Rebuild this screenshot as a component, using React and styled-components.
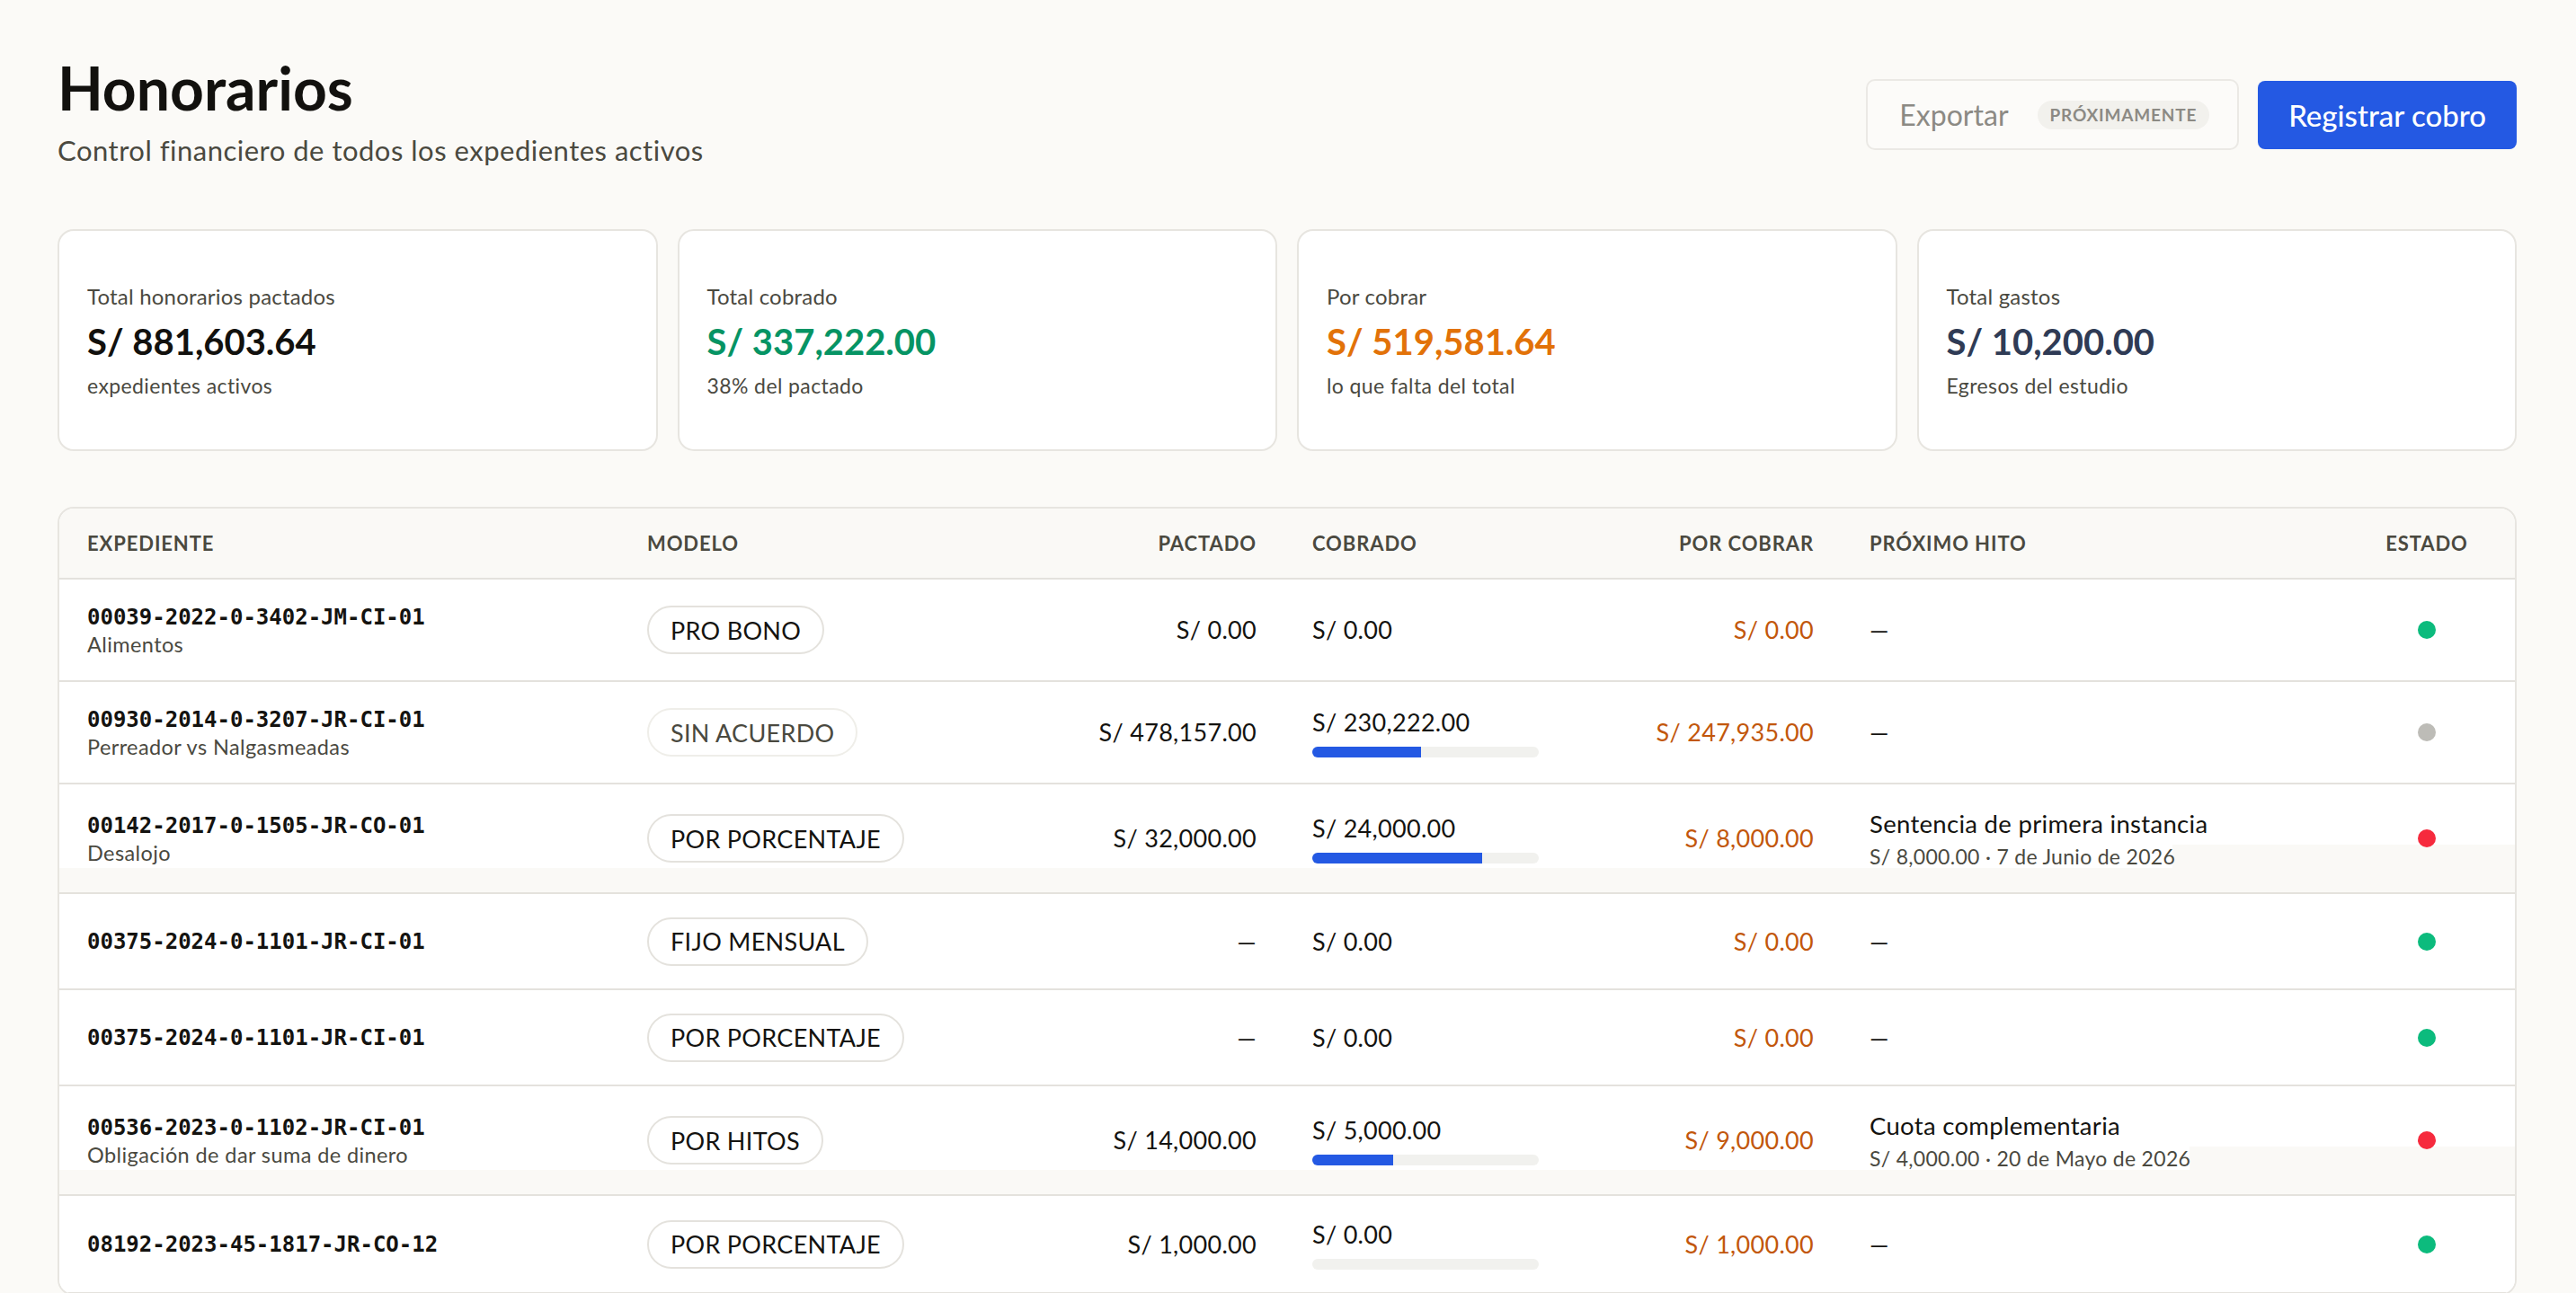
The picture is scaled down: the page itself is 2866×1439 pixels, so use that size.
import React from "react";
import styled, { createGlobalStyle } from "styled-components";

const GlobalStyle = createGlobalStyle`
  html, body { margin: 0; padding: 0; }
  body {
    background: #fbfaf7;
    font-family: Lato, "Noto Sans", sans-serif;
    color: #141310;
  }
  * { box-sizing: border-box; }
`;

const Page = styled.main`
  padding: 59px 66px 60px 64px;
`;

const Header = styled.header`
  display: flex;
  justify-content: space-between;
  align-items: flex-start;
`;

const TitleBlock = styled.div`
  display: flex;
  flex-direction: column;
`;

const Title = styled.h1`
  margin: 0;
  font-size: 66px;
  line-height: 78px;
  font-weight: 700;
  letter-spacing: 0;
  color: #12110e;
`;

const Subtitle = styled.p`
  margin: 12px 0 0;
  font-size: 31px;
  line-height: 36px;
  letter-spacing: 0.5px;
  color: #4a493f;
`;

const Actions = styled.div`
  display: flex;
  align-items: center;
  gap: 21px;
  padding-top: 29px;
`;

const GhostButton = styled.button`
  display: flex;
  align-items: center;
  gap: 32px;
  height: 79px;
  padding: 0 31px 0 35px;
  border: 2px solid #ebe9e5;
  border-radius: 10px;
  background: #fcfbf9;
  color: #8c8a84;
  font-family: inherit;
  font-size: 32px;
  cursor: not-allowed;
`;

const SoonPill = styled.span`
  display: inline-flex;
  align-items: center;
  height: 32px;
  padding: 0 14px;
  border-radius: 16px;
  background: #f2f1ed;
  color: #8c8a84;
  font-size: 19px;
  font-weight: 700;
  letter-spacing: 0.8px;
`;

const PrimaryButton = styled.button`
  height: 76px;
  padding: 0 34px;
  border: none;
  border-radius: 8px;
  background: #2459e3;
  color: #ffffff;
  font-family: inherit;
  font-size: 33px;
  font-weight: 500;
  cursor: pointer;
`;

const Stats = styled.section`
  display: grid;
  grid-template-columns: repeat(4, 1fr);
  gap: 22px;
  margin-top: 70px;
`;

const StatCard = styled.div`
  height: 247px;
  display: flex;
  flex-direction: column;
  justify-content: center;
  padding: 0 31px;
  background: #ffffff;
  border: 2px solid #e7e5e0;
  border-radius: 18px;
`;

const StatLabel = styled.div`
  font-size: 24px;
  line-height: 32px;
  letter-spacing: 0.2px;
  color: #4a493f;
`;

const StatValue = styled.div`
  margin-top: 10px;
  font-size: 40px;
  line-height: 48px;
  font-weight: 700;
  letter-spacing: 0;
  color: ${(p) => p.$color};
`;

const StatSub = styled.div`
  margin-top: 10px;
  font-size: 23px;
  line-height: 30px;
  letter-spacing: 0.4px;
  color: #4a493f;
`;

const TableCard = styled.section`
  margin-top: 62px;
  background: #ffffff;
  border: 2px solid #e7e5e0;
  border-radius: 18px;
  overflow: hidden;
`;

const COLS = "623px 440px 300px 320px 300px 553px 1fr";

const HeadRow = styled.div`
  display: grid;
  grid-template-columns: ${COLS};
  align-items: center;
  height: 79px;
  background: #faf9f6;
  border-bottom: 2px solid #e4e2dd;
`;

const HeadCell = styled.div`
  padding: 0 31px;
  font-size: 22px;
  font-weight: 700;
  letter-spacing: 0.9px;
  color: #4a493f;
  text-align: ${(p) => p.$align || "left"};
`;

const Row = styled.div`
  display: grid;
  grid-template-columns: ${COLS};
  align-items: center;
  padding: 25.5px 0;
  border-bottom: 2px solid #e4e2dd;
  background: ${(p) =>
    p.$band
      ? `linear-gradient(#faf9f6, #faf9f6) right bottom / ${p.$band}px 53px no-repeat,
         linear-gradient(#faf9f6, #faf9f6) left bottom / 100% 27px no-repeat, #ffffff`
      : "#ffffff"};
`;

const Cell = styled.div`
  padding: 0 31px;
  display: flex;
  flex-direction: column;
  align-items: ${(p) =>
    p.$align === "right" ? "flex-end" : p.$align === "center" ? "center" : "flex-start"};
`;

const CaseId = styled.div`
  font-family: "DejaVu Sans Mono", "Liberation Mono", monospace;
  font-size: 24px;
  line-height: 32px;
  font-weight: 700;
  color: #141310;
`;

const CaseSub = styled.div`
  font-size: 23.5px;
  line-height: 29px;
  letter-spacing: 0.4px;
  color: #4a493f;
`;

const ModelPill = styled.span`
  display: inline-flex;
  align-items: center;
  height: 54px;
  padding: 0 24px;
  border-radius: 27px;
  border: 2px solid ${(p) => (p.$muted ? "#efeee9" : "#e4e2dd")};
  color: ${(p) => (p.$muted ? "#4a493f" : "#141310")};
  font-size: 27px;
  letter-spacing: 0.3px;
  background: #ffffff;
`;

const Amount = styled.div`
  font-size: 27px;
  line-height: 34px;
  letter-spacing: 0.3px;
  color: ${(p) => p.$color || "#141310"};
`;

const Track = styled.div`
  margin-top: 10px;
  width: 252px;
  height: 12px;
  border-radius: 6px;
  background: #f1f1ee;
  overflow: hidden;
`;

const Fill = styled.div`
  height: 100%;
  background: #2459e3;
`;

const HitoTitle = styled.div`
  font-size: 27.5px;
  line-height: 36px;
  letter-spacing: 0.3px;
  color: #141310;
`;

const HitoSub = styled.div`
  margin-top: 3px;
  font-size: 23px;
  line-height: 30px;
  letter-spacing: 0.3px;
  color: #4a493f;
`;

const Dot = styled.span`
  width: 20px;
  height: 20px;
  border-radius: 50%;
  background: ${(p) =>
    p.$state === "green" ? "#0cbb7d" : p.$state === "red" ? "#f62a3d" : "#bdbcb7"};
`;

const stats = [
  { label: "Total honorarios pactados", value: "S/ 881,603.64", sub: "expedientes activos", color: "#12110e" },
  { label: "Total cobrado", value: "S/ 337,222.00", sub: "38% del pactado", color: "#069464" },
  { label: "Por cobrar", value: "S/ 519,581.64", sub: "lo que falta del total", color: "#e27208" },
  { label: "Total gastos", value: "S/ 10,200.00", sub: "Egresos del estudio", color: "#2f3b55" },
];

const rows = [
  { id: "00039-2022-0-3402-JM-CI-01", sub: "Alimentos", model: "PRO BONO", pactado: "S/ 0.00", cobrado: "S/ 0.00", pct: null, porCobrar: "S/ 0.00", state: "green" },
  { id: "00930-2014-0-3207-JR-CI-01", sub: "Perreador vs Nalgasmeadas", model: "SIN ACUERDO", muted: true, pactado: "S/ 478,157.00", cobrado: "S/ 230,222.00", pct: 48.15, porCobrar: "S/ 247,935.00", state: "gray" },
  { id: "00142-2017-0-1505-JR-CO-01", sub: "Desalojo", model: "POR PORCENTAJE", pactado: "S/ 32,000.00", cobrado: "S/ 24,000.00", pct: 75, porCobrar: "S/ 8,000.00", hito: { title: "Sentencia de primera instancia", sub: "S/ 8,000.00 · 7 de Junio de 2026" }, state: "red", band: 381 },
  { id: "00375-2024-0-1101-JR-CI-01", model: "FIJO MENSUAL", pactado: "—", cobrado: "S/ 0.00", pct: null, porCobrar: "S/ 0.00", state: "green" },
  { id: "00375-2024-0-1101-JR-CI-01", model: "POR PORCENTAJE", pactado: "—", cobrado: "S/ 0.00", pct: null, porCobrar: "S/ 0.00", state: "green" },
  { id: "00536-2023-0-1102-JR-CI-01", sub: "Obligación de dar suma de dinero", model: "POR HITOS", pactado: "S/ 14,000.00", cobrado: "S/ 5,000.00", pct: 35.7, porCobrar: "S/ 9,000.00", hito: { title: "Cuota complementaria", sub: "S/ 4,000.00 · 20 de Mayo de 2026" }, state: "red", band: 362 },
  { id: "08192-2023-45-1817-JR-CO-12", model: "POR PORCENTAJE", pactado: "S/ 1,000.00", cobrado: "S/ 0.00", pct: 0, porCobrar: "S/ 1,000.00", state: "green" },
];

export default function App() {
  return (
    <>
      <GlobalStyle />
      <Page>
        <Header>
          <TitleBlock>
            <Title>Honorarios</Title>
            <Subtitle>Control financiero de todos los expedientes activos</Subtitle>
          </TitleBlock>
          <Actions>
            <GhostButton disabled>
              Exportar
              <SoonPill>PRÓXIMAMENTE</SoonPill>
            </GhostButton>
            <PrimaryButton>Registrar cobro</PrimaryButton>
          </Actions>
        </Header>

        <Stats>
          {stats.map((s) => (
            <StatCard key={s.label}>
              <StatLabel>{s.label}</StatLabel>
              <StatValue $color={s.color}>{s.value}</StatValue>
              <StatSub>{s.sub}</StatSub>
            </StatCard>
          ))}
        </Stats>

        <TableCard>
          <HeadRow>
            <HeadCell>EXPEDIENTE</HeadCell>
            <HeadCell>MODELO</HeadCell>
            <HeadCell $align="right">PACTADO</HeadCell>
            <HeadCell>COBRADO</HeadCell>
            <HeadCell $align="right">POR COBRAR</HeadCell>
            <HeadCell>PRÓXIMO HITO</HeadCell>
            <HeadCell $align="center">ESTADO</HeadCell>
          </HeadRow>
          {rows.map((r, i) => (
            <Row key={i} $band={r.band}>
              <Cell>
                <CaseId>{r.id}</CaseId>
                {r.sub && <CaseSub>{r.sub}</CaseSub>}
              </Cell>
              <Cell>
                <ModelPill $muted={r.muted}>{r.model}</ModelPill>
              </Cell>
              <Cell $align="right">
                <Amount>{r.pactado}</Amount>
              </Cell>
              <Cell>
                <Amount>{r.cobrado}</Amount>
                {r.pct !== null && (
                  <Track>
                    <Fill style={{ width: `${r.pct}%` }} />
                  </Track>
                )}
              </Cell>
              <Cell $align="right">
                <Amount $color="#c2570c">{r.porCobrar}</Amount>
              </Cell>
              <Cell>
                {r.hito ? (
                  <>
                    <HitoTitle>{r.hito.title}</HitoTitle>
                    <HitoSub>{r.hito.sub}</HitoSub>
                  </>
                ) : (
                  <Amount>—</Amount>
                )}
              </Cell>
              <Cell $align="center">
                <Dot $state={r.state} />
              </Cell>
            </Row>
          ))}
        </TableCard>
      </Page>
    </>
  );
}
